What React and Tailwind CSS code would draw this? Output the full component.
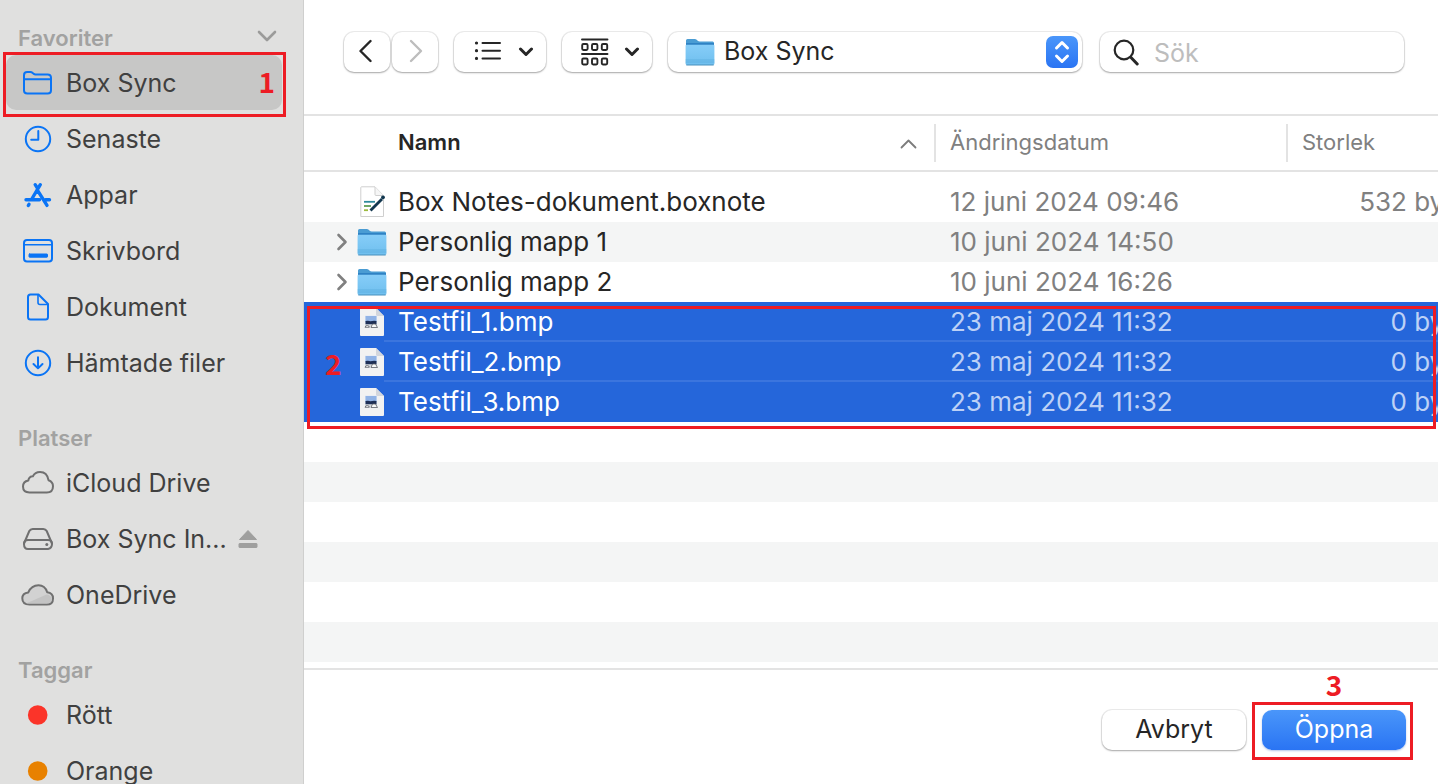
import React from "react";

const BLUE = "#0a74f5";

function SidebarIcon({ name }) {
  const common = {
    width: 34,
    height: 34,
    viewBox: "0 0 34 34",
    fill: "none",
    strokeWidth: 2,
    strokeLinecap: "round",
    strokeLinejoin: "round",
    "aria-hidden": true,
    className: "shrink-0",
  };
  const gray = "#707070";
  switch (name) {
    case "folder":
      return (
        <svg {...common} stroke={BLUE}>
          <path d="M4 24.500V9.200Q4 6 7.200 6h3.200q1.200 0 2 .7l1.200 1q.8.700 2 .7h12Q31 8.400 31 11.800v12.400q0 3.300-3.300 3.300H7.300Q4 27.500 4 24.500Z" />
          <path d="M4 13.300h27" />
        </svg>
      );
    case "clock":
      return (
        <svg {...common} stroke={BLUE}>
          <circle cx="18" cy="17" r="12.200" />
          <path d="M18.300 9v8.700H11.200" />
        </svg>
      );
    case "apps":
      return (
        <svg {...common} stroke={BLUE} strokeWidth="3.400">
          <path d="M15.200 6.700l2.200 3.500M20.300 6.700 11.800 21M18 13.200l9 14.200M6 21.700h13.500M25.500 21.700H29.500M9 26.300l-.7 1.200" />
        </svg>
      );
    case "desktop":
      return (
        <svg {...common} stroke={BLUE}>
          <rect x="4" y="6" width="28" height="21.500" rx="3" />
          <path d="M4 10.700h28" strokeWidth="1.600" />
          <rect x="9" y="20" width="18.500" height="3.200" rx="0.600" fill={BLUE} stroke={BLUE} strokeWidth="1" />
        </svg>
      );
    case "document":
      return (
        <svg {...common} stroke={BLUE}>
          <path d="M8 27V7q0-2.500 2.500-2.500h8L28 14v13q0 2.500-2.500 2.500h-15Q8 29.500 8 27Z" />
          <path d="M18 5v7.500q0 2 2 2h7.500" strokeWidth="1.600" />
        </svg>
      );
    case "download":
      return (
        <svg {...common} stroke={BLUE}>
          <circle cx="18" cy="17" r="12.200" />
          <path d="M18 11.300v11M13.500 18l4.500 4.400 4.500-4.400" />
        </svg>
      );
    case "cloud":
      return (
        <svg {...common} stroke={gray}>
          <path d="M9.500 26.500Q3 26.500 3 20.600q0-5 5.300-6 .6-4.300 4.600-4.400Q15 6 20 6q7.200 0 8.500 8.200Q33 15.700 33 20.300q0 6.200-6.200 6.200Z" />
        </svg>
      );
    case "drive":
      return (
        <svg {...common} stroke={gray}>
          <path d="M4 21.500 9.300 9Q10.400 6.900 12.700 6.900h10.600q2.300 0 3.400 2.100L32 21.500" />
          <path d="M4 22q0-4 4-4h20q4 0 4 4t-4 5H8q-4 0-4-5Z" />
          <circle cx="26.800" cy="22.400" r="1.500" fill={gray} stroke="none" />
        </svg>
      );
    case "onedrive":
      return (
        <svg {...common} stroke={gray}>
          <path d="M9.500 26.500Q2.300 26.500 2.300 20.300q0-5.200 6-5.900Q11.500 7.300 18.500 7.300q6.500 0 8.700 7Q33 15 33 20.400q0 6.100-6.200 6.100Z" fill="#d2d2d2" />
          <path d="M6 25.500 26.500 16.500q5.200.8 5.200 5 0 4-5 4H8Z" fill="#c3c3c3" stroke="none" />
        </svg>
      );
    case "red":
      return (
        <svg {...common}>
          <circle cx="17.700" cy="17" r="9.800" fill="#fb3429" />
        </svg>
      );
    default:
      return (
        <svg {...common}>
          <circle cx="17.700" cy="17" r="9.800" fill="#e88100" />
        </svg>
      );
  }
}

function FolderIcon({ id }) {
  return (
    <svg width="30" height="28" viewBox="0 0 30 28" className="shrink-0" aria-hidden="true">
      <defs>
        <linearGradient id={id} x1="0" y1="0" x2="0" y2="1">
          <stop offset="0" stopColor="#86cdf8" />
          <stop offset="1" stopColor="#6fbfee" />
        </linearGradient>
      </defs>
      <path d="M1 2.500Q1 1 2.500 1h7.200q1.200 0 2 .8l1 .9q.8.700 2 .7h13Q29 3.400 29 5v10H1Z" fill="#4a9cd3" />
      <path d="M1 5h28v3H1Z" fill="#2f82c4" />
      <path d="M.6 7.800Q.6 6.800 1.800 6.800h26.400q1.200 0 1.200 1v17.700q0 1.500-1.500 1.500H2.100Q.6 27 .6 25.500Z" fill={"url(#" + id + ")"} />
      <path d="M.6 22h28.800M.6 24h28.800" stroke="#58aadb" strokeWidth="0.700" />
      <path d="M1.300 27h27.400" stroke="#4b91bd" strokeWidth="1" />
    </svg>
  );
}

function NoteIcon() {
  return (
    <svg width="27" height="32" viewBox="0 0 27 32" className="-mr-[3px] shrink-0" aria-hidden="true">
      <path d="M1.500.8H15l8.500 8.700v21H.800V1.500q0-.7.7-.7Z" fill="#fff" stroke="#cfcfcf" strokeWidth="1" />
      <path d="M15 1v7.500q0 1 1 1h7.500" fill="#f6f6f6" stroke="#cfcfcf" strokeWidth="1" />
      <path d="M4 15.800h11" stroke="#2e8a9b" strokeWidth="1.800" />
      <path d="M4 20h7" stroke="#5f9f55" strokeWidth="1.800" />
      <path d="M4 24.200h4" stroke="#9dbb3f" strokeWidth="1.800" />
      <path d="M10.500 24.500 22 13" stroke="#12374f" strokeWidth="2.800" />
      <circle cx="23" cy="11.300" r="1.900" fill="#12374f" />
    </svg>
  );
}

function BmpIcon() {
  return (
    <svg width="24" height="28" viewBox="0 0 24 28" className="shrink-0" aria-hidden="true">
      <path d="M1 0h15l8 8v19q0 1-1 1H1q-1 0-1-1V1Q0 0 1 0Z" fill="#f2f2f2" />
      <path d="M16 0v7q0 1 1 1h7Z" fill="#d3d6dc" />
      <rect x="5" y="7.500" width="12" height="12" fill="#dfe8f5" />
      <rect x="5.500" y="8" width="11" height="6" fill="#91b3e6" />
      <path d="M5.500 13q3-.8 5 .3 3-1 6-.3v3.500h-11Z" fill="#1f2f55" />
      <path d="M5 16.500h12v2.500H5Z" fill="#d6d8da" />
      <path d="M5 19.300q.5-1.800 2.300-1.800t2 1.800ZM11 19.500l1.500-3.500h3l2 3.500Z" fill="#fafafa" stroke="#5d6066" strokeWidth="0.800" />
    </svg>
  );
}

function SmallChevron() {
  return (
    <svg width="16" height="10" viewBox="0 0 16 10" fill="none" stroke="#262626" strokeWidth="3" strokeLinecap="round" strokeLinejoin="round" aria-hidden="true">
      <path d="M2.500 2 8 7.500 13.500 2" />
    </svg>
  );
}

const sections = [
  {
    title: "Favoriter",
    collapsible: true,
    items: [
      { label: "Box Sync", icon: "folder", selected: true },
      { label: "Senaste", icon: "clock" },
      { label: "Appar", icon: "apps" },
      { label: "Skrivbord", icon: "desktop" },
      { label: "Dokument", icon: "document" },
      { label: "Hämtade filer", icon: "download" },
    ],
  },
  {
    title: "Platser",
    items: [
      { label: "iCloud Drive", icon: "cloud" },
      { label: "Box Sync In...", icon: "drive", eject: true },
      { label: "OneDrive", icon: "onedrive" },
    ],
  },
  {
    title: "Taggar",
    items: [
      { label: "Rött", icon: "red" },
      { label: "Orange", icon: "orange" },
    ],
  },
];

const files = [
  { name: "Box Notes-dokument.boxnote", date: "12 juni 2024 09:46", size: "532 byte", type: "note" },
  { name: "Personlig mapp 1", date: "10 juni 2024 14:50", size: "", type: "folder" },
  { name: "Personlig mapp 2", date: "10 juni 2024 16:26", size: "", type: "folder" },
  { name: "Testfil_1.bmp", date: "23 maj 2024 11:32", size: "0 byte", type: "bmp", selected: true, line: true },
  { name: "Testfil_2.bmp", date: "23 maj 2024 11:32", size: "0 byte", type: "bmp", selected: true, line: true },
  { name: "Testfil_3.bmp", date: "23 maj 2024 11:32", size: "0 byte", type: "bmp", selected: true },
];

const raised = "rounded-[10px] bg-white shadow-[0_0_0_1px_rgba(0,0,0,0.07),0_1px_2px_rgba(0,0,0,0.3)]";
const digit = "font-['Noto_Sans_CJK_SC',sans-serif] text-[28px] leading-7 font-bold text-[#ed1c24]";

function Sidebar() {
  return (
    <nav aria-label="Sidofält" className="w-[304px] shrink-0 overflow-hidden border-r border-[#cfcfce] bg-[#e0e0df] pt-[21px]">
      {sections.map((section) => (
        <section key={section.title} className="mb-[30px]">
          <div className="flex h-[34px] items-center justify-between pr-[26px] pl-[18px]">
            <h2 className="text-[22px] font-semibold text-[#a2a2a1]">{section.title}</h2>
            {section.collapsible && (
              <button type="button" aria-label="Dölj Favoriter">
                <svg width="20" height="12" viewBox="0 0 20 12" fill="none" stroke="#9b9b9a" strokeWidth="2.600" strokeLinecap="round" strokeLinejoin="round" className="mb-1">
                  <path d="M2 2l8 8 8-8" />
                </svg>
              </button>
            )}
          </div>
          <ul>
            {section.items.map((item) => (
              <li key={item.label} className="relative h-14 pr-[21px] pl-[6px]">
                <a
                  href="#"
                  aria-current={item.selected ? "page" : undefined}
                  className={
                    "flex h-[55px] items-center gap-[11px] rounded-[10px] pl-[14px] text-[25px] whitespace-nowrap text-[#404040] " +
                    (item.selected ? "bg-[#c7c7c6]" : "")
                  }
                >
                  <SidebarIcon name={item.icon} />
                  <span className="pt-[2px] pl-px">{item.label}</span>
                  {item.eject && (
                    <svg width="20" height="20" viewBox="0 0 20 20" fill="#9f9f9e" stroke="#9f9f9e" strokeLinejoin="round" aria-label="Mata ut">
                      <path d="M10 1.500 18.500 10.500H1.500Z" />
                      <rect x="1" y="14.500" width="18" height="4" rx="0.500" />
                    </svg>
                  )}
                </a>
                {item.selected && (
                  <span className="pointer-events-none absolute -top-[3px] right-[17px] -bottom-[6px] left-[3px] flex items-center justify-end border-[3px] border-[#ed1c24] pr-2 pb-2">
                    <span className={digit}>1</span>
                  </span>
                )}
              </li>
            ))}
          </ul>
        </section>
      ))}
    </nav>
  );
}

function Toolbar() {
  return (
    <header className="flex h-[114px] shrink-0 items-start pt-8 pr-[34px] pl-10">
      <button type="button" aria-label="Bakåt" className={"flex h-10 w-[46px] items-center justify-center pr-1 pb-[2px] " + raised}>
        <svg width="14" height="24" viewBox="0 0 14 24" fill="none" stroke="#262626" strokeWidth="2.400" strokeLinecap="round" strokeLinejoin="round">
          <path d="M12.500 2 2.500 12l10 10" />
        </svg>
      </button>
      <button type="button" aria-label="Framåt" className={"ml-[2px] flex h-10 w-[46px] items-center justify-center pb-[2px] pl-[2px] " + raised}>
        <svg width="14" height="24" viewBox="0 0 14 24" fill="none" stroke="#bdbdbd" strokeWidth="2.400" strokeLinecap="round" strokeLinejoin="round">
          <path d="M2 2l10 10L2 22" />
        </svg>
      </button>
      <button type="button" aria-label="Visa som lista" aria-haspopup="menu" className={"ml-4 flex h-10 w-[92px] items-center justify-between pr-[12px] pl-5 " + raised}>
        <svg width="28" height="22" viewBox="0 0 28 22" fill="none" stroke="#262626" strokeWidth="2" strokeLinecap="round">
          <path d="M8.500 2h17.500M8.500 9.700h17.500M8.500 17.400h17.500" />
          <path d="M2.500 2h.01M2.500 9.700h.01M2.500 17.400h.01" strokeWidth="3.200" />
        </svg>
        <SmallChevron />
      </button>
      <button type="button" aria-label="Gruppera" aria-haspopup="menu" className={"ml-4 flex h-10 w-[90px] items-center justify-between pr-[12px] pl-[18px] " + raised}>
        <svg width="29" height="28" viewBox="0 0 29 28" fill="none" stroke="#262626" strokeWidth="1.900" strokeLinecap="round">
          <path d="M2 1.500h25.500M2 16h25.500" />
          <rect x="2.200" y="6" width="5.400" height="6" rx="1.200" />
          <rect x="12" y="6" width="5.400" height="6" rx="1.200" />
          <rect x="21.800" y="6" width="5.400" height="6" rx="1.200" />
          <rect x="2.200" y="20.500" width="5.400" height="6" rx="1.200" />
          <rect x="12" y="20.500" width="5.400" height="6" rx="1.200" />
          <rect x="21.800" y="20.500" width="5.400" height="6" rx="1.200" />
        </svg>
        <SmallChevron />
      </button>
      <div className={"relative ml-4 flex h-10 min-w-[240px] flex-1 items-center " + raised}>
        <span className="pointer-events-none absolute left-[17px]">
          <FolderIcon id="folder-popup" />
        </span>
        <select aria-label="Mapp" className="h-full w-full appearance-none rounded-[10px] bg-transparent pb-[2px] pl-14 text-[25px] leading-[38px] text-[#262626] outline-none">
          <option>Box Sync</option>
        </select>
        <span className="pointer-events-none absolute right-1 flex size-8 items-center justify-center rounded-[7px] bg-linear-to-b from-[#4a96fa] to-[#2a74f3]">
          <svg width="16" height="24" viewBox="0 0 16 24" fill="none" stroke="#fff" strokeWidth="3" strokeLinecap="round" strokeLinejoin="round" aria-hidden="true">
            <path d="M2.500 8 8 2.500 13.500 8M2.500 16 8 21.500 13.500 16" />
          </svg>
        </span>
      </div>
      <label className={"ml-[18px] flex h-10 w-[304px] items-center gap-[15px] pl-[13px] " + raised}>
        <svg width="26" height="27" viewBox="0 0 26 27" fill="none" stroke="#262626" strokeWidth="2.200" strokeLinecap="round" className="shrink-0" aria-hidden="true">
          <circle cx="11" cy="11" r="9.300" />
          <path d="M18 18.500 24.200 25" strokeWidth="3" />
        </svg>
        <input type="search" aria-label="Sök" placeholder="Sök" className="w-full min-w-0 bg-transparent pt-[2px] text-[25px] leading-[38px] outline-none placeholder:text-[#bdbdbd]" />
      </label>
    </header>
  );
}

function FileTable() {
  const th = "h-[56px] border-b-2 border-[#e3e3e3] p-0 text-left text-[22px]";
  return (
    <div className="relative flex min-h-0 flex-1 flex-col overflow-hidden border-y-2 border-[#e3e3e3]">
      <table className="w-[calc(100%+30px)] table-fixed border-separate border-spacing-0">
        <colgroup>
          <col />
          <col className="w-[352px]" />
          <col className="w-[180px]" />
        </colgroup>
        <thead>
          <tr>
            <th className={th + " font-semibold text-[#262626]"} aria-sort="ascending">
              <span className="flex h-[38px] items-center justify-between border-r-2 border-[#e3e3e3] pr-[17px] pb-[2px] pl-[94px]">
                Namn
                <svg width="17" height="10" viewBox="0 0 17 10" fill="none" stroke="#7c7c7c" strokeWidth="1.800" strokeLinecap="round" strokeLinejoin="round" className="mt-1" aria-hidden="true">
                  <path d="M1.500 8.500l7-7 7 7" />
                </svg>
              </span>
            </th>
            <th className={th + " font-normal text-[#808080]"}>
              <span className="flex h-[38px] items-center border-r-2 border-[#e3e3e3] pb-[2px] pl-[14px]">Ändringsdatum</span>
            </th>
            <th className={th + " font-normal text-[#808080]"}>
              <span className="flex h-[38px] items-center pb-[2px] pl-[14px]">Storlek</span>
            </th>
          </tr>
        </thead>
        <tbody className="text-[26px] leading-[38px] whitespace-nowrap before:block before:h-[10px]">
          {files.map((file, i) => {
            const line = file.line ? "border-b-2 border-white/10 " : "";
            const tone = file.selected ? "text-[#bdd1f6]" : "text-[#808080]";
            return (
              <tr key={file.name} aria-selected={file.selected ? true : undefined} className={file.selected ? "bg-[#2566da]" : i % 2 ? "bg-[#f4f5f5]" : "bg-white"}>
                <td className="h-10 p-0">
                  <div className="flex h-10 items-center pl-8">
                    <span className="mr-[9px] w-3 shrink-0">
                      {file.type === "folder" && (
                        <button type="button" aria-label={"Expandera " + file.name} className="block">
                          <svg width="12" height="18" viewBox="0 0 12 18" fill="none" stroke="#808080" strokeWidth="2.600" strokeLinecap="round" strokeLinejoin="round">
                            <path d="M2.500 2l7 7-7 7" />
                          </svg>
                        </button>
                      )}
                    </span>
                    <span className={"flex w-[27px] shrink-0 " + (file.type === "folder" ? "justify-start" : "justify-end")}>
                      {file.type === "note" && <NoteIcon />}
                      {file.type === "folder" && <FolderIcon id={"folder-" + i} />}
                      {file.type === "bmp" && <BmpIcon />}
                    </span>
                    <span className={"h-10 flex-1 pt-px pl-[14px] " + line + (file.selected ? "text-white" : "text-[#262626]")}>{file.name}</span>
                  </div>
                </td>
                <td className="h-10 p-0">
                  <div className={"h-10 pt-px pl-[14px] " + line + tone}>{file.date}</div>
                </td>
                <td className="h-10 p-0">
                  <div className={"h-10 pt-px text-right " + line + tone}>{file.size}</div>
                </td>
              </tr>
            );
          })}
        </tbody>
      </table>
      <div className="flex-1 bg-[repeating-linear-gradient(to_bottom,#ffffff_0px,#ffffff_40px,#f4f5f5_40px,#f4f5f5_80px)]" />
      <div className="pointer-events-none absolute top-[190px] right-[2px] left-[3px] flex h-[123px] items-center border-[3px] border-[#ed1c24] pb-[10px] pl-[15px]">
        <span className={digit}>2</span>
      </div>
    </div>
  );
}

function Footer() {
  return (
    <footer className="flex h-[114px] shrink-0 items-start justify-end gap-4 pt-10 pr-8">
      <button type="button" className={"h-10 w-[144px] pb-[2px] text-[25px] leading-[38px] text-[#262626] " + raised}>Avbryt</button>
      <div className="relative">
        <button type="button" className="block h-10 w-[144px] rounded-[10px] bg-linear-to-b from-[#4a96fa] to-[#2a74f3] pb-[2px] text-[25px] leading-[38px] text-white shadow-[0_1px_2px_rgba(0,60,180,0.3)]">
          Öppna
        </button>
        <span className="pointer-events-none absolute -top-2 -right-[7px] -bottom-[10px] -left-[10px] border-[3px] border-[#ed1c24]" />
        <span className={"pointer-events-none absolute bottom-full left-1/2 mb-3 -translate-x-1/2 " + digit}>3</span>
      </div>
    </footer>
  );
}

export default function App() {
  return (
    <div className="flex h-screen overflow-hidden bg-white font-['Inter',sans-serif]">
      <Sidebar />
      <main className="flex min-w-0 flex-1 flex-col">
        <Toolbar />
        <FileTable />
        <Footer />
      </main>
    </div>
  );
}
